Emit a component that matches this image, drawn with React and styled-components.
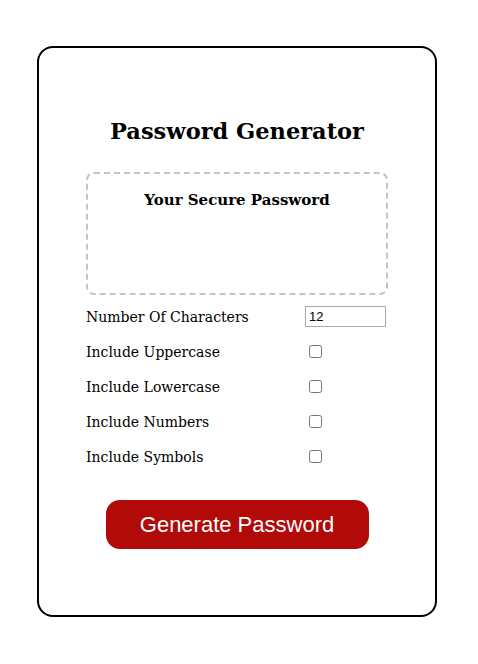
import React from "react";
import styled, { createGlobalStyle } from "styled-components";

const Global = createGlobalStyle`
  html, body { margin: 0; padding: 0; background: #fff; }
  body { font-family: "DejaVu Serif", Georgia, serif; color: #000; }
`;

const Card = styled.div`
  box-sizing: border-box;
  width: 400px;
  height: 571px;
  margin: 46px 0 0 37px;
  border: 2px solid #000;
  border-radius: 16px;
  padding: 68px 47px 0 47px;
  display: flex;
  flex-direction: column;
`;

const Title = styled.h1`
  margin: 0 0 26px;
  text-align: center;
  font-size: 22.5px;
  font-weight: bold;
  line-height: 30px;
`;

const Display = styled.div`
  box-sizing: border-box;
  height: 123px;
  border: 2px dashed #c4c4c4;
  border-radius: 8px;
  padding-top: 16px;
  text-align: center;
`;

const DisplayHeading = styled.h3`
  margin: 0;
  font-size: 15px;
  font-weight: bold;
  line-height: 20px;
`;

const Options = styled.div`
  display: flex;
  flex-direction: column;
  gap: 14px;
  margin-top: 11px;
`;

const Row = styled.label`
  display: grid;
  grid-template-columns: 219px 1fr;
  align-items: center;
  height: 21px;
  font-size: 14px;
`;

const NumberInput = styled.input`
  box-sizing: border-box;
  width: 81px;
  height: 21px;
  border: 1px solid #a9a9a9;
  padding: 1px 3px;
  font-family: "Liberation Sans", Arial, sans-serif;
  font-size: 13px;
  margin: 0;
`;

const Check = styled.input`
  margin: 0 0 0 4px;
  width: 13px;
  height: 13px;
`;

const Button = styled.button`
  align-self: center;
  margin-top: 33px;
  width: 263px;
  height: 49px;
  border: none;
  border-radius: 14px;
  background: #b20909;
  color: #fff;
  font-family: "Liberation Sans", Arial, sans-serif;
  font-size: 22px;
  cursor: pointer;
`;

const options = ["Include Uppercase", "Include Lowercase", "Include Numbers", "Include Symbols"];

export default function App() {
  return (
    <>
      <Global />
      <Card>
        <Title>Password Generator</Title>
        <Display>
          <DisplayHeading>Your Secure Password</DisplayHeading>
        </Display>
        <Options>
          <Row>
            Number Of Characters
            <NumberInput type="number" defaultValue={12} />
          </Row>
          {options.map((o) => (
            <Row key={o}>
              {o}
              <Check type="checkbox" />
            </Row>
          ))}
        </Options>
        <Button>Generate Password</Button>
      </Card>
    </>
  );
}
